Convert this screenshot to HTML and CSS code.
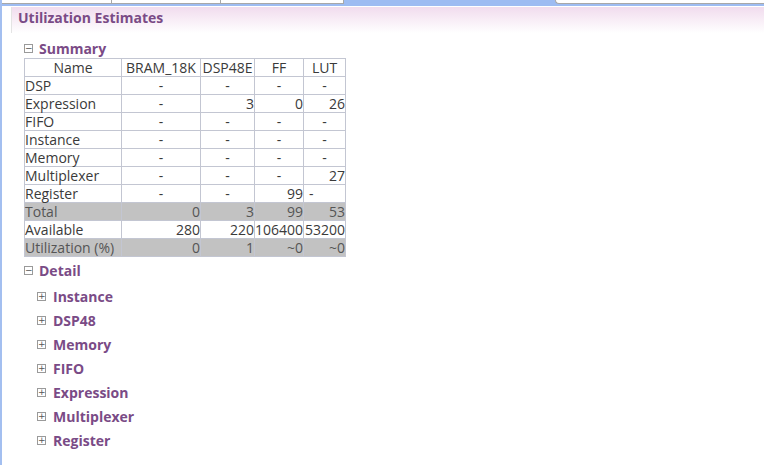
FILE: index.html
```html
<!DOCTYPE html>
<html>
<head>
<meta charset="utf-8">
<link rel="stylesheet" href="styles.css">
</head>
<body>
<div class="frame">
  <div class="tabbar">
    <div class="tab t1"></div>
    <div class="tab t2"></div>
    <div class="tab t3"></div>
    <div class="spacer"></div>
    <div class="tab t4"></div>
  </div>
  <div class="content">
    <div class="header"><h1>Utilization Estimates</h1></div>
    <div class="section">
      <div class="sec-title"><span class="box">&minus;</span><span>Summary</span></div>
      <table class="util">
        <thead>
          <tr><th class="c-name">Name</th><th class="c-bram">BRAM_18K</th><th class="c-dsp">DSP48E</th><th class="c-ff">FF</th><th class="c-lut">LUT</th></tr>
        </thead>
        <tbody>
          <tr><td>DSP</td><td class="d">-</td><td class="d">-</td><td class="d">-</td><td class="d">-</td></tr>
          <tr><td>Expression</td><td class="d">-</td><td class="n">3</td><td class="n">0</td><td class="n">26</td></tr>
          <tr><td>FIFO</td><td class="d">-</td><td class="d">-</td><td class="d">-</td><td class="d">-</td></tr>
          <tr><td>Instance</td><td class="d">-</td><td class="d">-</td><td class="d">-</td><td class="d">-</td></tr>
          <tr><td>Memory</td><td class="d">-</td><td class="d">-</td><td class="d">-</td><td class="d">-</td></tr>
          <tr><td>Multiplexer</td><td class="d">-</td><td class="d">-</td><td class="d">-</td><td class="n">27</td></tr>
          <tr><td>Register</td><td class="d">-</td><td class="d">-</td><td class="n">99</td><td class="l">-</td></tr>
          <tr class="gray"><td>Total</td><td class="n">0</td><td class="n">3</td><td class="n">99</td><td class="n">53</td></tr>
          <tr><td>Available</td><td class="n">280</td><td class="n">220</td><td class="n">106400</td><td class="n">53200</td></tr>
          <tr class="gray"><td>Utilization (%)</td><td class="n">0</td><td class="n">1</td><td class="n">~0</td><td class="n">~0</td></tr>
        </tbody>
      </table>
      <div class="sec-title detail"><span class="box">&minus;</span><span>Detail</span></div>
      <ul class="items">
        <li><span class="box">+</span><span>Instance</span></li>
        <li><span class="box">+</span><span>DSP48</span></li>
        <li><span class="box">+</span><span>Memory</span></li>
        <li><span class="box">+</span><span>FIFO</span></li>
        <li><span class="box">+</span><span>Expression</span></li>
        <li><span class="box">+</span><span>Multiplexer</span></li>
        <li><span class="box">+</span><span>Register</span></li>
      </ul>
    </div>
  </div>
</div>
</body>
</html>
```
FILE: styles.css
```css
html, body {
  margin: 0;
  padding: 0;
  background: #ffffff;
}
body {
  font-family: "Open Sans", "Liberation Sans", sans-serif;
  color: #3a3a3a;
}
.frame {
  width: 762px;
  height: 465px;
  border-left: 2px solid #a3bff0;
  overflow: hidden;
}
.tabbar {
  height: 6px;
  display: flex;
  background: #9dbcf2;
  border-bottom: 1px solid #ffffff;
}
.tab {
  height: 3px;
  background: #ffffff;
  border-bottom: 1px solid #a8a8a8;
  border-right: 1px solid #a8a8a8;
}
.t1 { width: 109px; }
.t2 { width: 108px; }
.t3 { width: 122px; }
.spacer { width: 211px; }
.t4 {
  flex: 1;
  border-right: none;
  border-bottom-left-radius: 8px;
  border-left: 1px solid #a8a8a8;
}
.content {
  padding-left: 9px;
}
.header {
  height: 26px;
  background: linear-gradient(#f1dcee, #ffffff);
  border-left: 1px solid #e4e4e4;
  padding-left: 6px;
}
.header h1 {
  margin: 0;
  font-size: 14px;
  font-weight: bold;
  color: #7a4b86;
  line-height: 22px;
  padding-top: 0;
}
.section {
  padding-left: 13px;
  padding-top: 5px;
}
.sec-title {
  display: flex;
  align-items: center;
  height: 20px;
  font-size: 14px;
  font-weight: bold;
  color: #7a4b86;
}
.box {
  width: 7px;
  height: 7px;
  border: 1px solid #9a9a9a;
  color: #555;
  font-size: 9px;
  line-height: 7px;
  text-align: center;
  font-weight: normal;
  margin-right: 6px;
  font-family: "DejaVu Sans", sans-serif;
}
.util {
  border-collapse: collapse;
  font-size: 14px;
  margin-top: 0;
}
.util th, .util td {
  border: 1px solid #c3c6d2;
  height: 17px;
  padding: 0;
  line-height: 17px;
  white-space: nowrap;
}
.util th { font-weight: normal; text-align: center; }
.c-name { width: 96px; }
.c-bram { width: 78px; }
.c-dsp { width: 53px; }
.c-ff { width: 48px; }
.c-lut { width: 41px; }
.util td.d { text-align: center; }
.util td.n { text-align: right; }
.util td.l { text-align: left; padding-left: 5px; }
.util tr.gray td { background: #c2c2c2; color: #555; }
.detail { margin-top: 3px; }
.items {
  list-style: none;
  margin: 4px 0 0 0;
  padding: 0 0 0 13px;
}
.items li {
  display: flex;
  align-items: center;
  height: 24px;
  font-size: 14px;
  font-weight: bold;
  color: #7a4b86;
}
.items .box { margin-right: 7px; }
```
